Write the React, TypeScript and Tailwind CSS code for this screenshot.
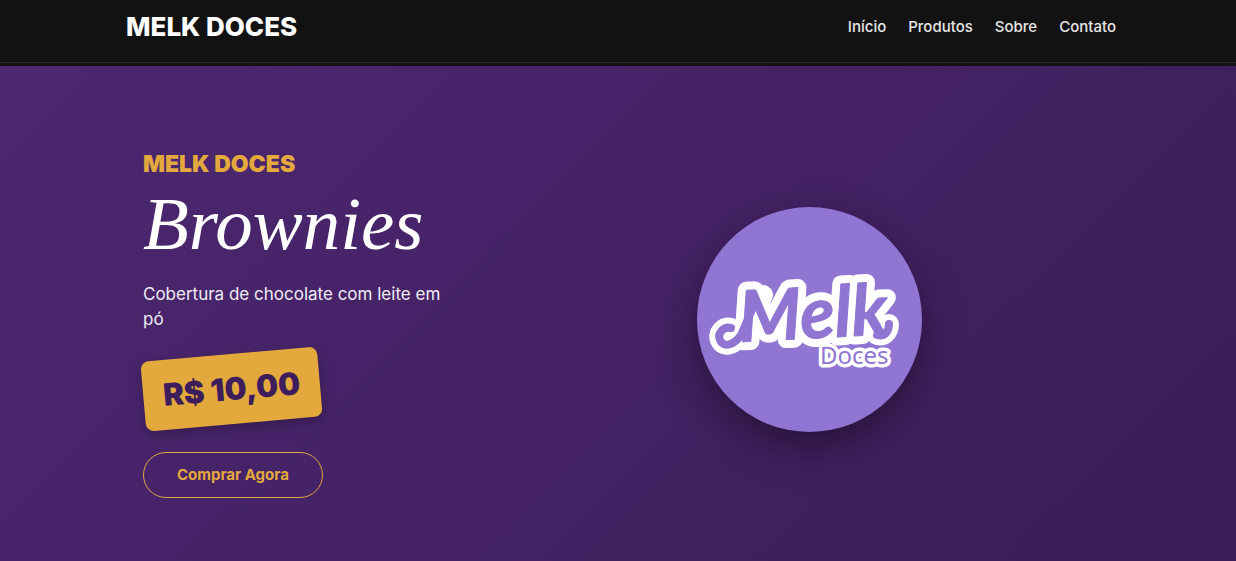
const links = [
  { label: "Início", href: "#inicio" },
  { label: "Produtos", href: "#produtos" },
  { label: "Sobre", href: "#sobre" },
  { label: "Contato", href: "#contato" },
];

function Header() {
  return (
    <header className="bg-[#121212] pb-[3px]">
      <div className="border-b border-[#2b2b2b]">
        <div className="mx-auto flex h-[62px] max-w-[996px] items-start justify-between pt-[9px] pl-1.5">
          <a href="#inicio" className="text-[26px] leading-9 font-extrabold text-white">
            MELK DOCES
          </a>
          <nav className="flex gap-[22px] text-[15px] leading-9 font-medium text-[#e6e6e6]">
            {links.map((link) => (
              <a key={link.href} href={link.href}>
                {link.label}
              </a>
            ))}
          </nav>
        </div>
      </div>
    </header>
  );
}

function Logo() {
  return (
    <svg
      viewBox="0 0 225 225"
      role="img"
      aria-label="Melk Doces"
      className="size-[225px] rounded-full bg-[#9075d3] shadow-[0_15px_40px_rgba(0,0,0,0.4)]"
    >
      <g fill="none" stroke="#fff" strokeWidth="20" strokeLinecap="round" strokeLinejoin="round">
        <path d="M34 121C26 119 20 127 23 133C27 142 38 137 44 128L66 88" />
        <path d="M180 128C187 130 192 125 192 117" />
      </g>
      <g
        fontFamily="Lato, sans-serif"
        fontWeight="700"
        fontStyle="italic"
        fontSize="71"
        strokeLinejoin="round"
      >
        <text x="43" y="135" transform="rotate(-3 43 135)" fill="#fff" stroke="#fff" strokeWidth="17" aria-hidden="true">
          Melk
        </text>
        <text x="43" y="135" transform="rotate(-3 43 135)" fill="#9075d3" stroke="#9075d3" strokeWidth="1">
          Melk
        </text>
      </g>
      <g fill="none" stroke="#9075d3" strokeWidth="8" strokeLinecap="round" strokeLinejoin="round">
        <path d="M34 121C26 119 20 127 23 133C27 142 38 137 44 128L58 96" />
        <path d="M180 128C187 130 192 125 192 117" />
      </g>
      <text
        x="123"
        y="157"
        fontFamily="'Noto Sans', sans-serif"
        fontSize="24"
        fill="#9075d3"
        stroke="#fff"
        strokeWidth="7"
        strokeLinejoin="round"
        paintOrder="stroke"
      >
        Doces
      </text>
    </svg>
  );
}

function Hero() {
  return (
    <main className="bg-linear-135 from-[#4d2872] to-[#3b1c57]">
      <div className="mx-auto grid max-w-[996px] grid-cols-[19fr_31fr] items-center pt-[84px] pb-[63px] pl-1.5">
        <section className="flex max-w-[335px] flex-col items-start pl-[17px]">
          <p className="text-[23px] leading-7 font-black text-[#e4a93c]">MELK DOCES</p>
          <h1 className="font-['Liberation_Serif',serif] text-[75px] leading-[92px] text-white italic">
            Brownies
          </h1>
          <p className="mt-3 text-[17px] leading-[25px] text-[#f0edf3]">
            Cobertura de chocolate com leite em pó
          </p>
          <p className="mt-[22px] -rotate-5 rounded-[8px] bg-[#e4a93c] px-5 py-[15px] text-[31px] leading-10 font-black text-[#3e1d5c] shadow-[0_4px_12px_rgba(0,0,0,0.25)]">
            R$ 10,00
          </p>
          <button
            type="button"
            className="mt-7 rounded-full border border-[#e4a93c] px-[33px] py-[11px] text-[15px] leading-[22px] font-bold text-[#e4a93c]"
          >
            Comprar Agora
          </button>
        </section>
        <div className="flex justify-center pb-2.5">
          <Logo />
        </div>
      </div>
    </main>
  );
}

export default function App() {
  return (
    <div className="min-h-screen bg-[#3b1c57] font-['Inter',sans-serif]">
      <Header />
      <Hero />
    </div>
  );
}
